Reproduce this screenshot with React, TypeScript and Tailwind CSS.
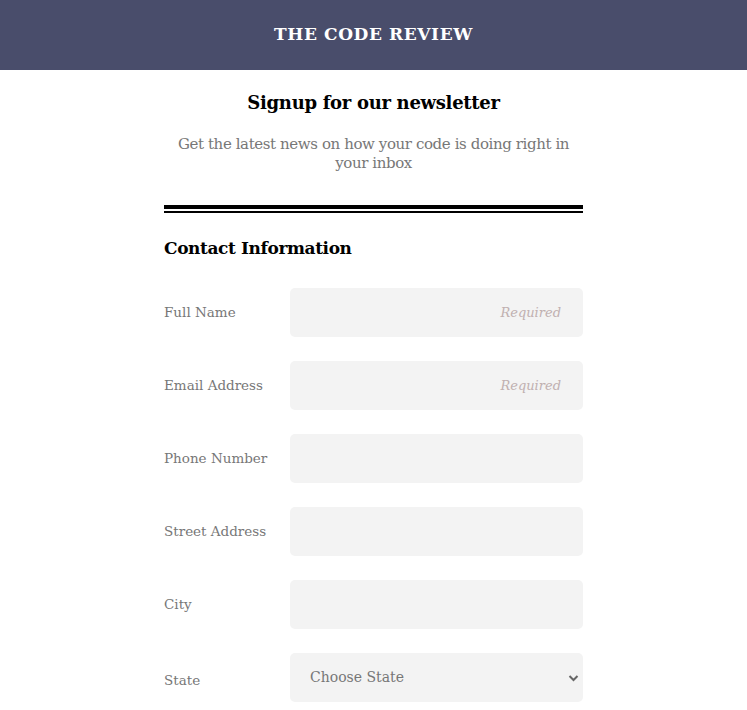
const font = { fontFamily: '"DejaVu Serif", serif' };

const fields = [
  { label: 'Full Name', required: true },
  { label: 'Email Address', required: true },
  { label: 'Phone Number', required: false },
  { label: 'Street Address', required: false },
  { label: 'City', required: false },
];

export default function App() {
  return (
    <div className="min-h-screen bg-white font-['DejaVu_Serif',serif]">
      <header className="flex h-[70px] items-center justify-center bg-[#494d6b]">
        <h1 className="text-[17px] font-bold tracking-[0.6px] text-white">THE CODE REVIEW</h1>
      </header>

      <main className="mx-auto w-[419px]">
        <h2 className="mt-[20px] text-center text-[18px] font-bold leading-[26px] tracking-[-0.3px] text-black">
          Signup for our newsletter
        </h2>
        <p className="mx-auto mt-[19px] w-[404px] text-center text-[15px] leading-[19px] tracking-[-0.4px] text-[#777]">
          Get the latest news on how your code is doing right in your inbox
        </p>

        <div className="mt-[32px] h-[4px] bg-black" />
        <div className="mt-[2px] h-[2px] bg-black" />

        <h3 className="mt-[22px] text-[17px] font-bold leading-[26px] tracking-[-0.4px] text-black">
          Contact Information
        </h3>

        <form className="mt-[27px] flex flex-col gap-[24px]">
          {fields.map((f) => (
            <div key={f.label} className="flex items-center">
              <label className="w-[126px] text-[13.5px] text-[#777]">{f.label}</label>
              <input
                type="text"
                placeholder={f.required ? 'Required' : ''}
                className="h-[49px] flex-1 rounded-[5px] bg-[#f3f3f3] px-[22px] text-right text-[13px] italic outline-none placeholder:text-[#c0b0b0]"
                style={font}
              />
            </div>
          ))}
          <div className="flex items-center">
            <label className="mt-[5px] w-[126px] text-[13.5px] text-[#777]">State</label>
            <div className="relative flex-1">
              <select
                className="h-[49px] w-full appearance-none rounded-[5px] bg-[#f3f3f3] px-[20px] text-[14px] text-[#777] outline-none"
                style={font}
                defaultValue=""
              >
                <option value="">Choose State</option>
              </select>
              <svg
                className="pointer-events-none absolute right-[4px] top-1/2 -translate-y-1/2"
                width="11"
                height="10"
                viewBox="0 0 11 10"
              >
                <path d="M1.5 3 L5.5 7 L9.5 3" fill="none" stroke="#666" strokeWidth="2" />
              </svg>
            </div>
          </div>
        </form>
      </main>
    </div>
  );
}
